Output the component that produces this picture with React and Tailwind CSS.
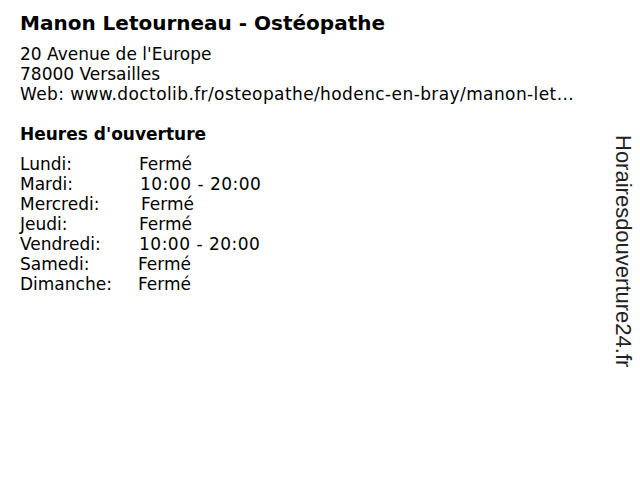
import React from "react";

const hours = [
  { day: "Lundi:", time: "Fermé", pad: "pl-[119px]" },
  { day: "Mardi:", time: "10:00 - 20:00", pad: "pl-[120px] tracking-[0.5px]" },
  { day: "Mercredi:", time: "Fermé", pad: "pl-[121px]" },
  { day: "Jeudi:", time: "Fermé", pad: "pl-[119px]" },
  { day: "Vendredi:", time: "10:00 - 20:00", pad: "pl-[119px] tracking-[0.5px]" },
  { day: "Samedi:", time: "Fermé", pad: "pl-[118px]" },
  { day: "Dimanche:", time: "Fermé", pad: "pl-[118px]" },
];

export default function App() {
  return (
    <div className="w-[640px] h-[480px] bg-white text-black flex font-['DejaVu_Sans',sans-serif] overflow-hidden">
      <div className="flex-1 pl-5 pt-[10px]">
        <h1 className="text-[20px] font-bold leading-[26px]">Manon Letourneau - Ostéopathe</h1>

        {/* Address block */}
        <div className="mt-[8px] text-[17px] leading-[20px]">
          <div>20 Avenue de l'Europe</div>
          <div>78000 Versailles</div>
          <div className="tracking-[0.4px] whitespace-nowrap">Web: www.doctolib.fr/osteopathe/hodenc-en-bray/manon-let...</div>
        </div>

        <h2 className="mt-[20px] text-[17px] font-bold leading-[20px]">Heures d'ouverture</h2>

        <div className="mt-[10px] text-[17px] leading-[20px]">
          {hours.map((h) => (
            <div key={h.day} className="relative">
              <span>{h.day}</span>
              <span className={`absolute left-0 top-0 whitespace-nowrap ${h.pad}`}>{h.time}</span>
            </div>
          ))}
        </div>
      </div>

      {/* Vertical site label */}
      <div className="w-[40px] flex pl-[11px] pt-[135px]">
        <div className="[writing-mode:vertical-rl] text-[22px] leading-[24px] font-['Liberation_Sans',sans-serif] text-[#222]">
          Horairesdouverture24.fr
        </div>
      </div>
    </div>
  );
}
